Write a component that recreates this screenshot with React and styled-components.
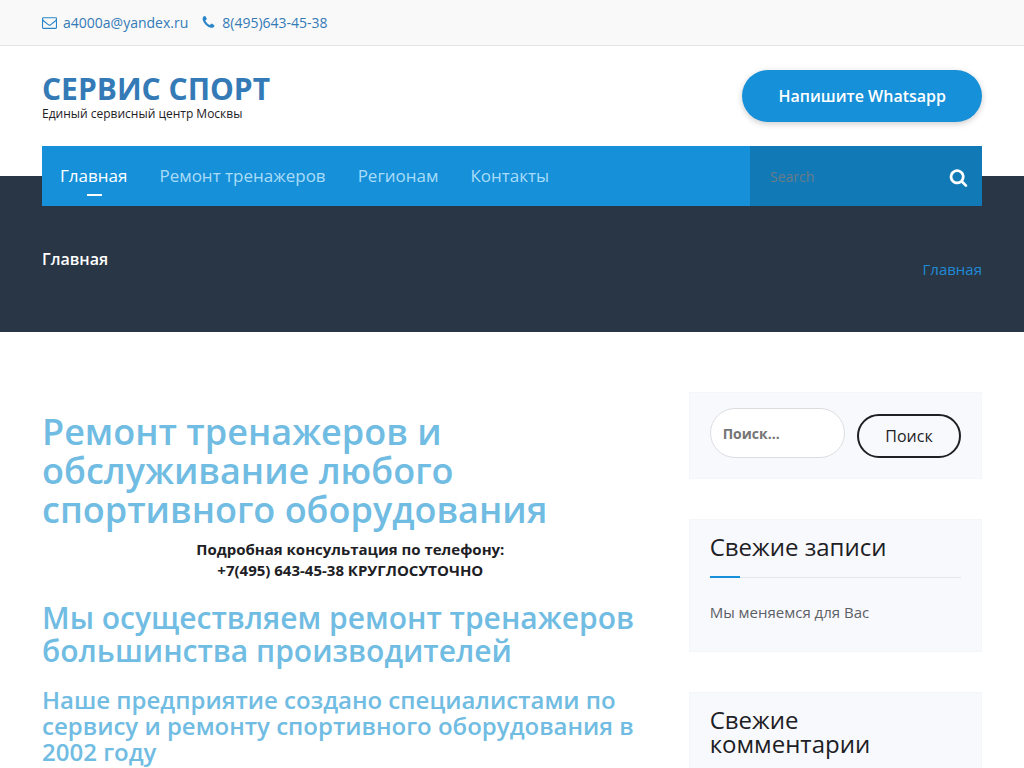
import React, { useState } from "react";
import styled, { createGlobalStyle } from "styled-components";

const GlobalStyle = createGlobalStyle`
  * {
    box-sizing: border-box;
  }
  body {
    margin: 0;
    background: #fff;
    color: #1d2024;
    font-family: "Open Sans", "Noto Sans", sans-serif;
    font-size: 15px;
    line-height: 21px;
  }
  a {
    text-decoration: none;
  }
  input,
  button {
    font-family: inherit;
  }
`;

const icons = {
  envelope:
    "M1664 1504v-768q-32 36-69 66-268 206-426 338-51 43-83 67t-86.500 48.500-102.500 24.500h-2q-48 0-102.500-24.500t-86.500-48.500-83-67q-158-132-426-338-37-30-69-66v768q0 13 9.500 22.500t22.500 9.500h1472q13 0 22.500-9.500t9.500-22.500zm0-1051v-24.500l-.5-13-3-12.500-5.500-9-9-7.500-14-2.500h-1472q-13 0-22.500 9.500t-9.500 22.500q0 168 147 284 193 152 401 317 6 5 35 29.500t46 37.500 44.500 31.500 50.500 27.500 43 9h2q20 0 43-9t50.500-27.500 44.500-31.500 46-37.500 35-29.500q208-165 401-317 54-43 100.500-115.500t46.500-131.500zm128-37v1088q0 66-47 113t-113 47h-1472q-66 0-113-47t-47-113v-1088q0-66 47-113t113-47h1472q66 0 113 47t47 113z",
  phone:
    "M1600 1240q0 27-10 70.500t-21 68.500q-21 50-122 106-94 51-186 51-27 0-53-3.500t-57.500-12.500-47-14.500-55.500-20.500-49-18q-98-35-175-83-127-79-264-216t-216-264q-48-77-83-175-3-9-18-49t-20.500-55.500-14.500-47-12.500-57.500-3.500-53q0-92 51-186 56-101 106-122 25-11 68.500-21t70.500-10q14 0 21 3 18 6 53 76 11 19 30 54t35 63.500 31 53.500q3 4 17.500 25t21.500 35.500 7 28.500q0 20-28.500 50t-62 55-62 53-28.500 46q0 9 5 22.500t8.500 20.500 14 24 11.500 19q76 137 174 235t235 174q2 1 19 11.500t24 14 20.500 8.500 22.500 5q18 0 46-28.500t53-62 55-62 50-28.500q14 0 28.500 7t35.500 21.500 25 17.500q25 15 53.500 31t63.500 35 54 30q70 35 76 53 3 7 3 21z",
  search:
    "M1216 832q0-185-131.500-316.500t-316.500-131.500-316.500 131.500-131.500 316.500 131.500 316.500 316.500 131.500 316.500-131.500 131.500-316.500zm512 832q0 52-38 90t-90 38q-54 0-90-38l-343-342q-179 124-399 124-143 0-273.500-55.500t-225-150-150-225-55.500-273.500 55.500-273.500 150-225 225-150 273.500-55.500 273.500 55.500 225 150 150 225 55.500 273.500q0 220-124 399l343 343q37 37 37 90z",
};

function Icon({ name, size }) {
  return (
    <svg
      width={size}
      height={size}
      viewBox="0 0 1792 1792"
      fill="currentColor"
      aria-hidden="true"
    >
      <path d={icons[name]} />
    </svg>
  );
}

const menu = [
  { text: "Главная", link: "#home" },
  { text: "Ремонт тренажеров", link: "#repair" },
  { text: "Регионам", link: "#regions" },
  { text: "Контакты", link: "#contacts" },
];

function App() {
  const [active, setActive] = useState("#home");

  return (
    <>
      <GlobalStyle />
      <TopBar>
        <Contacts>
          <ContactLink href="mailto:a4000a@yandex.ru">
            <Icon name="envelope" size={15} />
            a4000a@yandex.ru
          </ContactLink>
          <ContactLink href="tel:84956434538">
            <Icon name="phone" size={15} />
            8(495)643-45-38
          </ContactLink>
        </Contacts>
      </TopBar>

      <header>
        <Brand>
          <div>
            <Logo href="#home">СЕРВИС СПОРТ</Logo>
            <Tagline>Единый сервисный центр Москвы</Tagline>
          </div>
          <Whatsapp href="#whatsapp">Напишите Whatsapp</Whatsapp>
        </Brand>
        <NavWrap>
          <NavBar>
            <Menu>
              {menu.map((item) => (
                <li key={item.link}>
                  <MenuLink
                    href={item.link}
                    $active={active === item.link}
                    onClick={() => setActive(item.link)}
                  >
                    {item.text}
                  </MenuLink>
                </li>
              ))}
            </Menu>
            <NavSearch onSubmit={(e) => e.preventDefault()}>
              <NavInput type="search" placeholder="Search" aria-label="Search" />
              <NavButton type="submit" aria-label="Search">
                <Icon name="search" size={19} />
              </NavButton>
            </NavSearch>
          </NavBar>
        </NavWrap>
      </header>

      <Hero>
        <HeroInner>
          <HeroTitle>Главная</HeroTitle>
          <Crumb href="#home">Главная</Crumb>
        </HeroInner>
      </Hero>

      <Page>
        <Content>
          <H1>Ремонт тренажеров и обслуживание любого спортивного оборудования</H1>
          <Phone>
            Подробная консультация по телефону:
            <br />
            +7(495) 643-45-38 КРУГЛОСУТОЧНО
          </Phone>
          <H2>Мы осуществляем ремонт тренажеров большинства производителей</H2>
          <H3>
            Наше предприятие создано специалистами по сервису и ремонту
            спортивного оборудования в 2002 году
          </H3>
        </Content>

        <Sidebar>
          <Widget>
            <SearchForm onSubmit={(e) => e.preventDefault()}>
              <SearchInput
                type="search"
                placeholder="Поиск…"
                aria-label="Поиск"
              />
              <SearchButton type="submit">Поиск</SearchButton>
            </SearchForm>
          </Widget>
          <Widget>
            <WidgetTitle>Свежие записи</WidgetTitle>
            <Posts>
              <li>
                <PostLink href="#post">Мы меняемся для Вас</PostLink>
              </li>
            </Posts>
          </Widget>
          <Widget>
            <WidgetTitle>Свежие комментарии</WidgetTitle>
          </Widget>
        </Sidebar>
      </Page>
    </>
  );
}

const Container = styled.div`
  width: 100%;
  max-width: 970px;
  margin: 0 auto;
  padding: 0 15px;
`;

const TopBar = styled.div`
  background: #f9f9f9;
  border-bottom: 1px solid #e4e4e4;
`;

const Contacts = styled(Container)`
  display: flex;
  gap: 13px;
  padding-top: 12px;
  padding-bottom: 12px;
`;

const ContactLink = styled.a`
  display: flex;
  align-items: center;
  gap: 6px;
  color: #337ab7;
  font-size: 14px;
  svg {
    color: #2a85c8;
  }
`;

const Brand = styled(Container)`
  display: flex;
  justify-content: space-between;
  align-items: center;
  padding-top: 24px;
  padding-bottom: 24px;
`;

const Logo = styled.a`
  display: block;
  color: #337ab7;
  font-size: 30px;
  font-weight: 700;
  line-height: 36px;
`;

const Tagline = styled.p`
  margin: 0;
  font-size: 12px;
  line-height: 14px;
`;

const Whatsapp = styled.a`
  padding: 14px 36px;
  border-radius: 26px;
  background: #1690d8;
  color: #fff;
  font-size: 16px;
  font-weight: 600;
  line-height: 24px;
  box-shadow: 0 2px 6px rgba(0, 0, 0, 0.2);
`;

const NavWrap = styled(Container)`
  position: relative;
  z-index: 1;
  margin-bottom: -30px;
`;

const NavBar = styled.nav`
  display: flex;
  justify-content: space-between;
  background: #1690d8;
`;

const Menu = styled.ul`
  display: flex;
  gap: 32px;
  margin: 0;
  padding: 0 18px;
  list-style: none;
`;

const MenuLink = styled.a`
  position: relative;
  display: block;
  color: ${(props) => (props.$active ? "#fff" : "#a9dcf9")};
  font-size: 17px;
  line-height: 60px;
  &::after {
    content: "";
    display: ${(props) => (props.$active ? "block" : "none")};
    position: absolute;
    left: 50%;
    bottom: 10px;
    width: 15px;
    height: 2px;
    margin-left: -7px;
    background: #fff;
  }
`;

const NavSearch = styled.form`
  display: flex;
  align-items: center;
  width: 232px;
  padding: 0 14px 0 20px;
  background: #117ab6;
`;

const NavInput = styled.input`
  flex: 1;
  min-width: 0;
  padding: 0;
  border: 0;
  outline: 0;
  background: transparent;
  color: #fff;
  font-size: 14px;
  &::placeholder {
    color: #6b7b86;
  }
`;

const NavButton = styled.button`
  display: flex;
  padding: 2px 0 0;
  border: 0;
  background: transparent;
  color: #fff;
  cursor: pointer;
`;

const Hero = styled.section`
  background: #293645;
`;

const HeroInner = styled(Container)`
  display: flex;
  justify-content: space-between;
  align-items: flex-start;
  padding-top: 72px;
  padding-bottom: 51px;
`;

const HeroTitle = styled.h2`
  margin: 0;
  color: #fff;
  font-size: 16px;
  font-weight: 600;
  line-height: 23px;
`;

const Crumb = styled.a`
  padding-top: 11px;
  padding-bottom: 1px;
  color: #1f8bd6;
`;

const Page = styled.main`
  display: grid;
  grid-template-columns: minmax(0, 2fr) minmax(0, 1fr);
  width: 100%;
  max-width: 970px;
  margin: 0 auto;
  padding: 60px 0;
`;

const Content = styled.article`
  padding: 20px 15px 0;
`;

const H1 = styled.h1`
  margin: 0 0 10px;
  color: #70bce2;
  font-size: 36px;
  font-weight: 600;
  line-height: 39px;
`;

const H2 = styled.h2`
  margin: 20px 0;
  color: #70bce2;
  font-size: 30px;
  font-weight: 600;
  line-height: 33px;
`;

const H3 = styled.h3`
  margin: 20px 0 10px;
  color: #70bce2;
  font-size: 24px;
  font-weight: 600;
  line-height: 26px;
`;

const Phone = styled.p`
  margin: 0;
  font-size: 15px;
  font-weight: 700;
  text-align: center;
`;

const Sidebar = styled.aside`
  display: flex;
  flex-direction: column;
  gap: 40px;
  padding: 0 15px;
`;

const Widget = styled.section`
  padding: 15px 20px 20px;
  border: 1px solid #f5f6fa;
  background: #f8f9fd;
`;

const SearchForm = styled.form`
  display: flex;
  align-items: flex-end;
  gap: 12px;
`;

const SearchInput = styled.input`
  flex: 1;
  min-width: 0;
  height: 50px;
  padding: 0 12px;
  border: 1px solid #dcdde1;
  border-radius: 25px;
  outline: 0;
  background: #fff;
  font-size: 14px;
  font-weight: 700;
  &::placeholder {
    color: #757575;
  }
`;

const SearchButton = styled.button`
  width: 104px;
  height: 44px;
  padding: 0;
  border: 2px solid #1d2024;
  border-radius: 22px;
  background: transparent;
  color: #1d2024;
  font-size: 16px;
  font-weight: 500;
  cursor: pointer;
`;

const WidgetTitle = styled.h3`
  position: relative;
  margin: 0 0 24px;
  padding-bottom: 18px;
  border-bottom: 1px solid #e2e7ec;
  font-size: 24px;
  font-weight: 400;
  line-height: 24px;
  &::after {
    content: "";
    position: absolute;
    left: 0;
    bottom: -1px;
    width: 30px;
    height: 2px;
    background: #1690d8;
  }
`;

const Posts = styled.ul`
  margin: 0;
  padding: 0 0 8px;
  list-style: none;
`;

const PostLink = styled.a`
  display: block;
  color: #5c6065;
`;

export default App;
